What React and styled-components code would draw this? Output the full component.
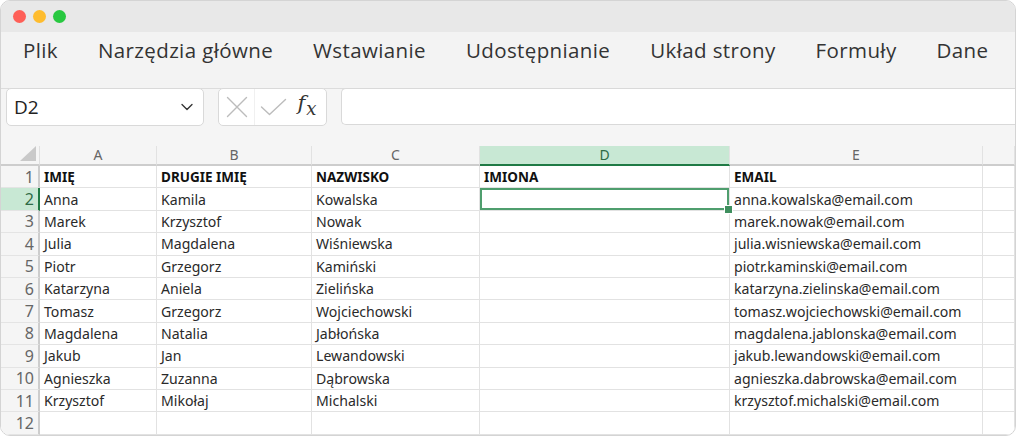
import styled, { createGlobalStyle } from 'styled-components'
import { ChevronDown } from 'lucide-react'

const GlobalStyle = createGlobalStyle`
  html, body { margin: 0; padding: 0; background: #ffffff; }
  * { box-sizing: border-box; }
`

const menuItems = ['Plik', 'Narzędzia główne', 'Wstawianie', 'Udostępnianie', 'Układ strony', 'Formuły', 'Dane']

const columns = ['A', 'B', 'C', 'D', 'E', '']

const rows = [
  ['IMIĘ', 'DRUGIE IMIĘ', 'NAZWISKO', 'IMIONA', 'EMAIL', ''],
  ['Anna', 'Kamila', 'Kowalska', '', 'anna.kowalska@email.com', ''],
  ['Marek', 'Krzysztof', 'Nowak', '', 'marek.nowak@email.com', ''],
  ['Julia', 'Magdalena', 'Wiśniewska', '', 'julia.wisniewska@email.com', ''],
  ['Piotr', 'Grzegorz', 'Kamiński', '', 'piotr.kaminski@email.com', ''],
  ['Katarzyna', 'Aniela', 'Zielińska', '', 'katarzyna.zielinska@email.com', ''],
  ['Tomasz', 'Grzegorz', 'Wojciechowski', '', 'tomasz.wojciechowski@email.com', ''],
  ['Magdalena', 'Natalia', 'Jabłońska', '', 'magdalena.jablonska@email.com', ''],
  ['Jakub', 'Jan', 'Lewandowski', '', 'jakub.lewandowski@email.com', ''],
  ['Agnieszka', 'Zuzanna', 'Dąbrowska', '', 'agnieszka.dabrowska@email.com', ''],
  ['Krzysztof', 'Mikołaj', 'Michalski', '', 'krzysztof.michalski@email.com', ''],
  ['', '', '', '', '', ''],
]

const activeCol = 3
const activeRow = 1

const App = () => {
  return <>
    <GlobalStyle/>
    <Window>
      <TitleBar>
        <Light $color='#fe5f57'/>
        <Light $color='#febc2e'/>
        <Light $color='#28c840'/>
      </TitleBar>

      <MenuBar>
        {menuItems.map(item => <MenuItem key={item}>{item}</MenuItem>)}
      </MenuBar>

      <Toolbar>
        <NameBox>
          <span>D2</span>
          <ChevronDown size={20} strokeWidth={1.6}/>
        </NameBox>
        <FormulaButtons>
          <IconButton $divider>
            <svg width='22' height='22' viewBox='0 0 22 22' fill='none' stroke='currentColor' strokeWidth='1.4' strokeLinecap='round'>
              <path d='M1.5 1.5 L20.5 20.5 M20.5 1.5 L1.5 20.5'/>
            </svg>
          </IconButton>
          <IconButton>
            <svg width='27' height='18' viewBox='0 0 27 18' fill='none' stroke='currentColor' strokeWidth='1.4' strokeLinecap='round' strokeLinejoin='round'>
              <path d='M1.5 9 L9.5 16.5 L25.5 1.5'/>
            </svg>
          </IconButton>
          <Fx>f<sub>x</sub></Fx>
        </FormulaButtons>
        <FormulaInput/>
      </Toolbar>

      <Sheet>
        <Corner>
          <svg width='18' height='16' viewBox='0 0 18 16'>
            <polygon points='17,0 17,15 1,15' fill='#c9c9c9'/>
          </svg>
        </Corner>
        {columns.map((col, i) => (
          <ColHeader key={'h' + i} $active={i === activeCol}>{col}</ColHeader>
        ))}

        {rows.map((row, r) => <>
          <RowHeader key={'r' + r} $active={r === activeRow}>{r + 1}</RowHeader>
          {row.map((value, c) => (
            <Cell
              key={r + '-' + c}
              $bold={r === 0}
              $selected={r === activeRow && c === activeCol}
            >
              {value}
            </Cell>
          ))}
        </>)}
      </Sheet>
    </Window>
  </>
}

const Window = styled.div`
  width: 1016px;
  height: 436px;
  border: 1px solid #d4d4d4;
  border-radius: 10px;
  overflow: hidden;
  background: #f5f5f5;
  display: flex;
  flex-direction: column;
`

const TitleBar = styled.div`
  height: 31px;
  flex-shrink: 0;
  background: #e8e8e8;
  display: flex;
  align-items: center;
  gap: 7px;
  padding-left: 12px;
`

const Light = styled.span`
  width: 13px;
  height: 13px;
  border-radius: 50%;
  background: ${p => p.$color};
`

const MenuBar = styled.div`
  height: 57px;
  flex-shrink: 0;
  background: #f3f3f3;
  border-bottom: 1px solid #dcdcdc;
  display: flex;
  align-items: flex-start;
  gap: 40px;
  padding: 4px 0 0 22px;
  font-family: "Open Sans", "Noto Sans", sans-serif;
  font-size: 20.5px;
  letter-spacing: 0.38px;
  color: #333333;
  white-space: nowrap;
`

const MenuItem = styled.span`
  line-height: 28px;
`

const Toolbar = styled.div`
  height: 57px;
  flex-shrink: 0;
  display: flex;
  align-items: flex-start;
  padding: 0 0 0 5px;
  gap: 14px;
  background: #f5f5f5;
`

const Box = styled.div`
  height: 38px;
  background: #ffffff;
  border: 1px solid #d9d9d9;
  border-radius: 5px;
  margin-top: -1px;
`

const NameBox = styled(Box)`
  width: 198px;
  display: flex;
  align-items: center;
  justify-content: space-between;
  padding: 0 6px 0 7px;
  font-family: "Open Sans", "Noto Sans", sans-serif;
  font-size: 19px;
  color: #222222;
  svg { color: #333333; }
`

const FormulaButtons = styled(Box)`
  width: 109px;
  display: flex;
  align-items: center;
  padding-left: 0;
`

const IconButton = styled.span`
  width: 36px;
  height: 100%;
  display: flex;
  align-items: center;
  justify-content: center;
  color: #bcbcbc;
  border-right: ${p => p.$divider ? '1px solid #f0f0f0' : 'none'};
`

const Fx = styled.span`
  flex: 1;
  text-align: center;
  font-family: "DejaVu Serif", "Liberation Serif", serif;
  font-style: italic;
  font-size: 21px;
  color: #333333;
  margin-top: -4px;
  padding-right: 3px;
  sub {
    font-size: 18px;
    vertical-align: -5px;
    margin-left: 1px;
  }
`

const FormulaInput = styled(Box)`
  flex: 1;
  border-right: none;
  border-radius: 5px 0 0 5px;
  height: 37px;
`

const Sheet = styled.div`
  flex: 1;
  display: grid;
  grid-template-columns: 39px 117px 155px 168px 250px 253px 1fr;
  grid-template-rows: 20px repeat(12, 22.4px);
  background: #ffffff;
  font-family: "Noto Sans", "Open Sans", sans-serif;
  font-size: 14.1px;
  color: #222222;
`

const HeaderBase = styled.div`
  background: #f5f5f5;
  color: #666666;
  display: flex;
  align-items: center;
  font-size: 14px;
`

const Corner = styled(HeaderBase)`
  border-right: 1px solid #e0e0e0;
  border-bottom: 2px solid #cdcdcd;
  justify-content: flex-end;
  align-items: flex-end;
  padding: 0 2px 2px 0;
`

const ColHeader = styled(HeaderBase)`
  justify-content: center;
  border-right: 1px solid #e2e2e2;
  border-bottom: 2px solid ${p => p.$active ? '#1f7a45' : '#cdcdcd'};
  background: ${p => p.$active ? '#c8e8d4' : '#f5f5f5'};
  color: ${p => p.$active ? '#2e6b45' : '#666666'};
  padding-bottom: 1px;
`

const RowHeader = styled(HeaderBase)`
  justify-content: flex-end;
  padding-right: 4px;
  font-size: 16px;
  border-bottom: 1px solid #e4e4e4;
  border-right: 2px solid ${p => p.$active ? '#1f7a45' : '#cdcdcd'};
  background: ${p => p.$active ? '#c8e8d4' : '#f5f5f5'};
  color: ${p => p.$active ? '#2e6b45' : '#666666'};
`

const Cell = styled.div`
  position: relative;
  display: flex;
  align-items: center;
  padding-left: 4px;
  white-space: nowrap;
  border-right: 1px solid #e2e2e2;
  border-bottom: 1px solid #e2e2e2;
  font-weight: ${p => p.$bold ? 700 : 400};
  font-size: ${p => p.$bold ? '13.5px' : '14.1px'};
  color: ${p => p.$bold ? '#111111' : '#2a2a2a'};
  ${p => p.$selected && `
    box-shadow: inset 0 0 0 2px #4f9e6e;
    &::after {
      content: '';
      position: absolute;
      right: -4px;
      bottom: -4px;
      width: 7px;
      height: 7px;
      background: #3f8f5e;
      border: 1px solid #ffffff;
      z-index: 2;
    }
  `}
`

export default App
